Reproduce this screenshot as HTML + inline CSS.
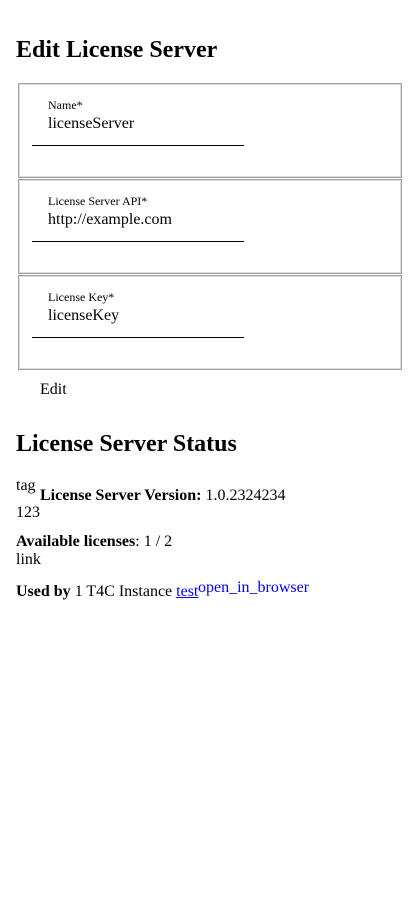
<!DOCTYPE html>
<html><head><style>
body{margin:0;width:420px;height:920px;background:#fff;font-family:"Liberation Serif",serif;color:#000;position:relative}
.a{position:absolute;white-space:nowrap}
h2{margin:0;font-size:24px;font-weight:bold}
.box{position:absolute;left:18px;width:382px;height:93px;border:1px solid #a0a0a0;box-shadow:0 0 0 1px #ddd inset}
.lbl{position:absolute;left:29px;top:14px;font-size:12px}
.val{position:absolute;left:29px;top:31px;font-size:16px}
.ln{position:absolute;left:13px;top:61px;width:212px;height:1px;background:#000}
</style></head><body>
<h2 class="a" style="left:16px;top:37px">Edit License Server</h2>
<div class="box" style="top:83px"><div class="lbl">Name*</div><div class="val">licenseServer</div><div class="ln"></div></div>
<div class="box" style="top:179px"><div class="lbl">License Server API*</div><div class="val">http://example.com</div><div class="ln"></div></div>
<div class="box" style="top:275px"><div class="lbl">License Key*</div><div class="val">licenseKey</div><div class="ln"></div></div>
<div class="a" style="left:40px;top:381px;font-size:16px">Edit</div>
<h2 class="a" style="left:16px;top:431px">License Server Status</h2>
<div class="a" style="left:16px;top:477px;font-size:16px">tag</div>
<div class="a" style="left:40px;top:487px;font-size:16px"><b>License Server Version:</b> 1.0.2324234</div>
<div class="a" style="left:16px;top:504px;font-size:16px">123</div>
<div class="a" style="left:16px;top:533px;font-size:16px"><b>Available licenses</b>: 1 / 2</div>
<div class="a" style="left:16px;top:551px;font-size:16px">link</div>
<div class="a" style="left:16px;top:583px;font-size:16px"><b>Used by</b> 1 T4C Instance <u style="color:#00e">test</u></div>
<div class="a" style="left:198px;top:579px;font-size:16px;color:#00e">open_in_browser</div>
</body></html>
